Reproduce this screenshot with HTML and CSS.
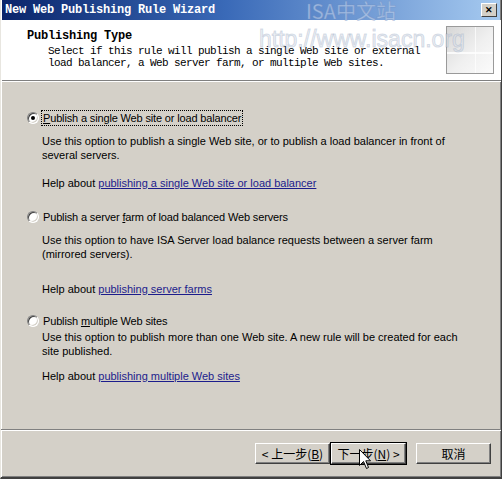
FILE: index.html
```html
<!DOCTYPE html>
<html lang="en">
<head>
<meta charset="UTF-8">
<title>New Web Publishing Rule Wizard</title>
<link rel="stylesheet" href="styles.css">
</head>
<body>

<div class="window">
    <div class="titlebar">
        <span class="title">New Web Publishing Rule Wizard</span>
        <span class="close-btn">&#x2715;</span>
    </div>

    <div class="header">
        <div class="header-text">
            <h1>Publishing Type</h1>
            <p>Select if this rule will publish a single Web site or external<br>load balancer, a Web server farm, or multiple Web sites.</p>
        </div>
        <div class="header-art"></div>
    </div>

    <div class="content">
        <div class="option first">
            <label class="choice">
                <input type="radio" name="pubType" checked>
                <span class="choice-text focused"><u>P</u>ublish a single Web site or load balancer</span>
            </label>
            <p class="desc">Use this option to publish a single Web site, or to publish a load balancer in front of<br>several servers.</p>
            <p class="help">Help about <a href="#">publishing a single Web site or load balancer</a></p>
        </div>

        <div class="option second">
            <label class="choice">
                <input type="radio" name="pubType">
                <span class="choice-text">Publish a server <u>f</u>arm of load balanced Web servers</span>
            </label>
            <p class="desc">Use this option to have ISA Server load balance requests between a server farm<br>(mirrored servers).</p>
            <p class="help wide">Help about <a href="#">publishing server farms</a></p>
        </div>

        <div class="option third">
            <label class="choice">
                <input type="radio" name="pubType">
                <span class="choice-text">Publish <u>m</u>ultiple Web sites</span>
            </label>
            <p class="desc tight">Use this option to publish more than one Web site. A new rule will be created for each<br>site published.</p>
            <p class="help narrow">Help about <a href="#">publishing multiple Web sites</a></p>
        </div>
    </div>

    <div class="buttons">
        <button class="btn">&lt; 上一步(<u>B</u>)</button>
        <button class="btn default">下一步(<u>N</u>) &gt;</button>
        <button class="btn cancel">取消</button>
    </div>

    <!-- site stamp over the title bar and header -->
    <div class="stamp-name">ISA中文站</div>
    <div class="stamp-url">http://www.isacn.org</div>

    <svg class="cursor" width="13" height="21" viewBox="0 0 13 21">
        <path d="M0.5 0.5 L0.5 16.5 L4.5 12.5 L7.5 19.5 L9.5 18.5 L6.8 11.8 L11.5 11.8 Z" fill="#fff" stroke="#000" stroke-width="1"/>
    </svg>
</div>

</body>
</html>
```

FILE: styles.css
```css
body {
    margin: 0;
    padding: 0;
    background-color: #d4d0c8;
    font-family: 'Liberation Sans', Arial, sans-serif;
    font-size: 11px;
    color: #000;
}
.window {
    position: relative;
    width: 502px;
    height: 479px;
    box-sizing: border-box;
    background-color: #d4d0c8;
    border-left: 1px solid #e8e6e0;
    border-right: 1px solid #404040;
    border-bottom: 2px solid #404040;
    box-shadow: inset 1px 0 0 #fff, inset -1px -1px 0 #808080;
    display: flex;
    flex-direction: column;
    overflow: hidden;
}
.titlebar {
    height: 20px;
    margin: 0 1px 0 1px;
    background: linear-gradient(to right, #0a246a, #3a6ab8 45%, #a6caf0);
    display: flex;
    align-items: center;
    justify-content: space-between;
    padding: 0 3px 0 3px;
}
.title {
    font-family: 'Liberation Mono', 'DejaVu Sans Mono', monospace;
    font-weight: bold;
    font-size: 12px;
    letter-spacing: -0.2px;
    color: #fff;
}
.close-btn {
    width: 14px;
    height: 12px;
    background-color: #d4d0c8;
    border: 1px solid;
    border-color: #fff #404040 #404040 #fff;
    font-size: 9px;
    font-weight: bold;
    line-height: 12px;
    text-align: center;
    color: #000;
}
.header {
    height: 60px;
    margin-left: 1px;
    background-color: #fff;
    border-bottom: 1px solid #808080;
    box-shadow: 0 1px 0 #fff;
    display: flex;
    justify-content: space-between;
    font-family: 'Liberation Mono', 'DejaVu Sans Mono', monospace;
}
.header-text {
    padding: 9px 0 0 25px;
}
.header h1 {
    margin: 0;
    font-size: 12px;
    font-weight: bold;
    letter-spacing: -0.2px;
    line-height: 14px;
}
.header p {
    margin: 2px 0 0 21px;
    font-size: 11px;
    letter-spacing: -0.6px;
    line-height: 12px;
}
.header-art {
    width: 46px;
    height: 46px;
    margin: 6px 7px 0 0;
    border: 1px solid #9a9a9a;
    background:
        linear-gradient(to right, transparent 60%, rgba(255,255,255,0.7) 60%, rgba(255,255,255,0.7) 62%, transparent 62%),
        linear-gradient(to bottom, transparent 55%, rgba(255,255,255,0.8) 55%, rgba(255,255,255,0.8) 58%, transparent 58%),
        linear-gradient(135deg, #d6d6d6, #f0f0f0 55%, #fbfbfb);
}
.content {
    flex: 1;
    padding: 28px 0 0 26px;
    border-bottom: 1px solid #808080;
    box-shadow: 0 1px 0 #fff;
    margin: 1px 0 0 0;
}
.option p {
    margin: 0;
    padding-left: 15px;
    line-height: 14px;
}
.choice {
    display: flex;
    align-items: center;
    height: 16px;
}
.choice input {
    appearance: none;
    -webkit-appearance: none;
    width: 12px;
    height: 12px;
    margin: 0 2px 0 0;
    border-radius: 50%;
    border: 1px solid;
    border-color: #808080 #fff #fff #808080;
    box-shadow: inset 1px 1px 0 #404040, inset -1px -1px 0 #d4d0c8;
    background-color: #fff;
    box-sizing: border-box;
    position: relative;
}
.choice input:checked::after {
    content: "";
    position: absolute;
    left: 3px;
    top: 3px;
    width: 4px;
    height: 4px;
    border-radius: 50%;
    background-color: #000;
}
.choice-text {
    padding: 1px 1px;
    border: 1px solid transparent;
    letter-spacing: -0.15px;
}
.choice-text.focused {
    border: 1px dotted #000;
}
.desc {
    margin-top: 8px !important;
}
.desc.tight {
    margin-top: 1px !important;
}
.help {
    margin-top: 14px !important;
}
.help.wide {
    margin-top: 21px !important;
}
.help.narrow {
    margin-top: 11px !important;
}
.help a {
    color: #1c1c8c;
    text-decoration: underline;
}
.option.second {
    margin-top: 19px;
}
.option.third {
    margin-top: 17px;
}
.buttons {
    height: 44px;
    display: flex;
    align-items: center;
    justify-content: flex-end;
    padding: 0 10px 2px 0;
    margin-top: 1px;
}
.btn {
    width: 75px;
    height: 21px;
    padding: 0;
    font-family: 'Noto Sans CJK SC', 'Liberation Sans', sans-serif;
    font-size: 12px;
    line-height: 17px;
    background-color: #d4d0c8;
    color: #000;
    border: 1px solid;
    border-color: #fff #404040 #404040 #fff;
    box-shadow: inset -1px -1px 0 #808080;
}
.btn u {
    text-decoration: underline;
}
.btn.default {
    outline: 1px solid #000;
    outline-offset: 0;
    margin-left: 1px;
}
.btn.cancel {
    margin-left: 10px;
}
.stamp-name {
    position: absolute;
    left: 305px;
    top: 0;
    font-family: 'Noto Sans CJK SC', sans-serif;
    font-size: 20px;
    line-height: 21px;
    color: rgba(225, 235, 250, 0.5);
    -webkit-text-stroke: 1px rgba(110, 140, 190, 0.4);
}
.stamp-url {
    position: absolute;
    left: 258px;
    top: 26px;
    font-family: 'Liberation Sans', Arial, sans-serif;
    font-size: 23px;
    color: rgba(225, 230, 238, 0.55);
    -webkit-text-stroke: 1px rgba(130, 150, 180, 0.3);
}
.cursor {
    position: absolute;
    left: 358px;
    top: 449px;
}
```
